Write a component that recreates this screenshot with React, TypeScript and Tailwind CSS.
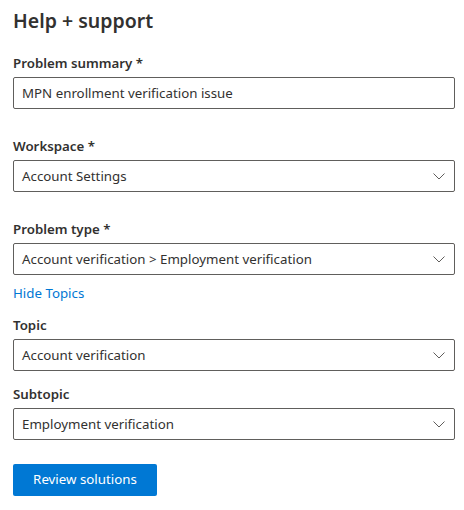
import React from 'react';

const Chevron = () => (
  <svg width="12" height="7" viewBox="0 0 12 7" fill="none" className="shrink-0">
    <path d="M0.5 0.5 L6 6 L11.5 0.5" stroke="#605e5c" strokeWidth="1" />
  </svg>
);

const Label = ({ text, className = '' }: { text: string; className?: string }) => (
  <div className={`h-5 leading-5 text-[13.3px] font-semibold text-[#323130] ${className}`}>{text}</div>
);

const Select = ({ value }: { value: string }) => (
  <div className="mt-1 h-8 flex items-center justify-between border border-[#605e5c] rounded-[2px] pl-2 pr-[9px] pt-px text-[13.3px] text-[#323130]">
    <span>{value}</span>
    <Chevron />
  </div>
);

const App: React.FC = () => {
  return (
    <div className="w-[464px] h-[510px] bg-white pl-[13px] pr-[9px] pt-[7px] font-['Segoe_UI','Noto_Sans',sans-serif] text-[#323130]">
      <h1 className="h-7 leading-7 text-[19.5px] font-semibold">Help + support</h1>

      <Label text="Problem summary *" className="mt-[18px]" />
      <div className="mt-1 h-8 flex items-center border border-[#605e5c] rounded-[2px] px-2 pt-px text-[13.3px]">
        MPN enrollment verification issue
      </div>

      <Label text="Workspace *" className="mt-[27px]" />
      <Select value="Account Settings" />

      <Label text="Problem type *" className="mt-[27px]" />
      <Select value="Account verification > Employment verification" />

      <div className="mt-2 h-5 leading-5 text-[13.3px] text-[#0078d4]">Hide Topics</div>

      <Label text="Topic" className="mt-3" />
      <Select value="Account verification" />

      <Label text="Subtopic" className="mt-[13px]" />
      <Select value="Employment verification" />

      <button className="mt-6 h-8 w-[144px] rounded-[2px] bg-[#0078d4] text-white text-[13.3px] font-normal">
        Review solutions
      </button>
    </div>
  );
};

export default App;
